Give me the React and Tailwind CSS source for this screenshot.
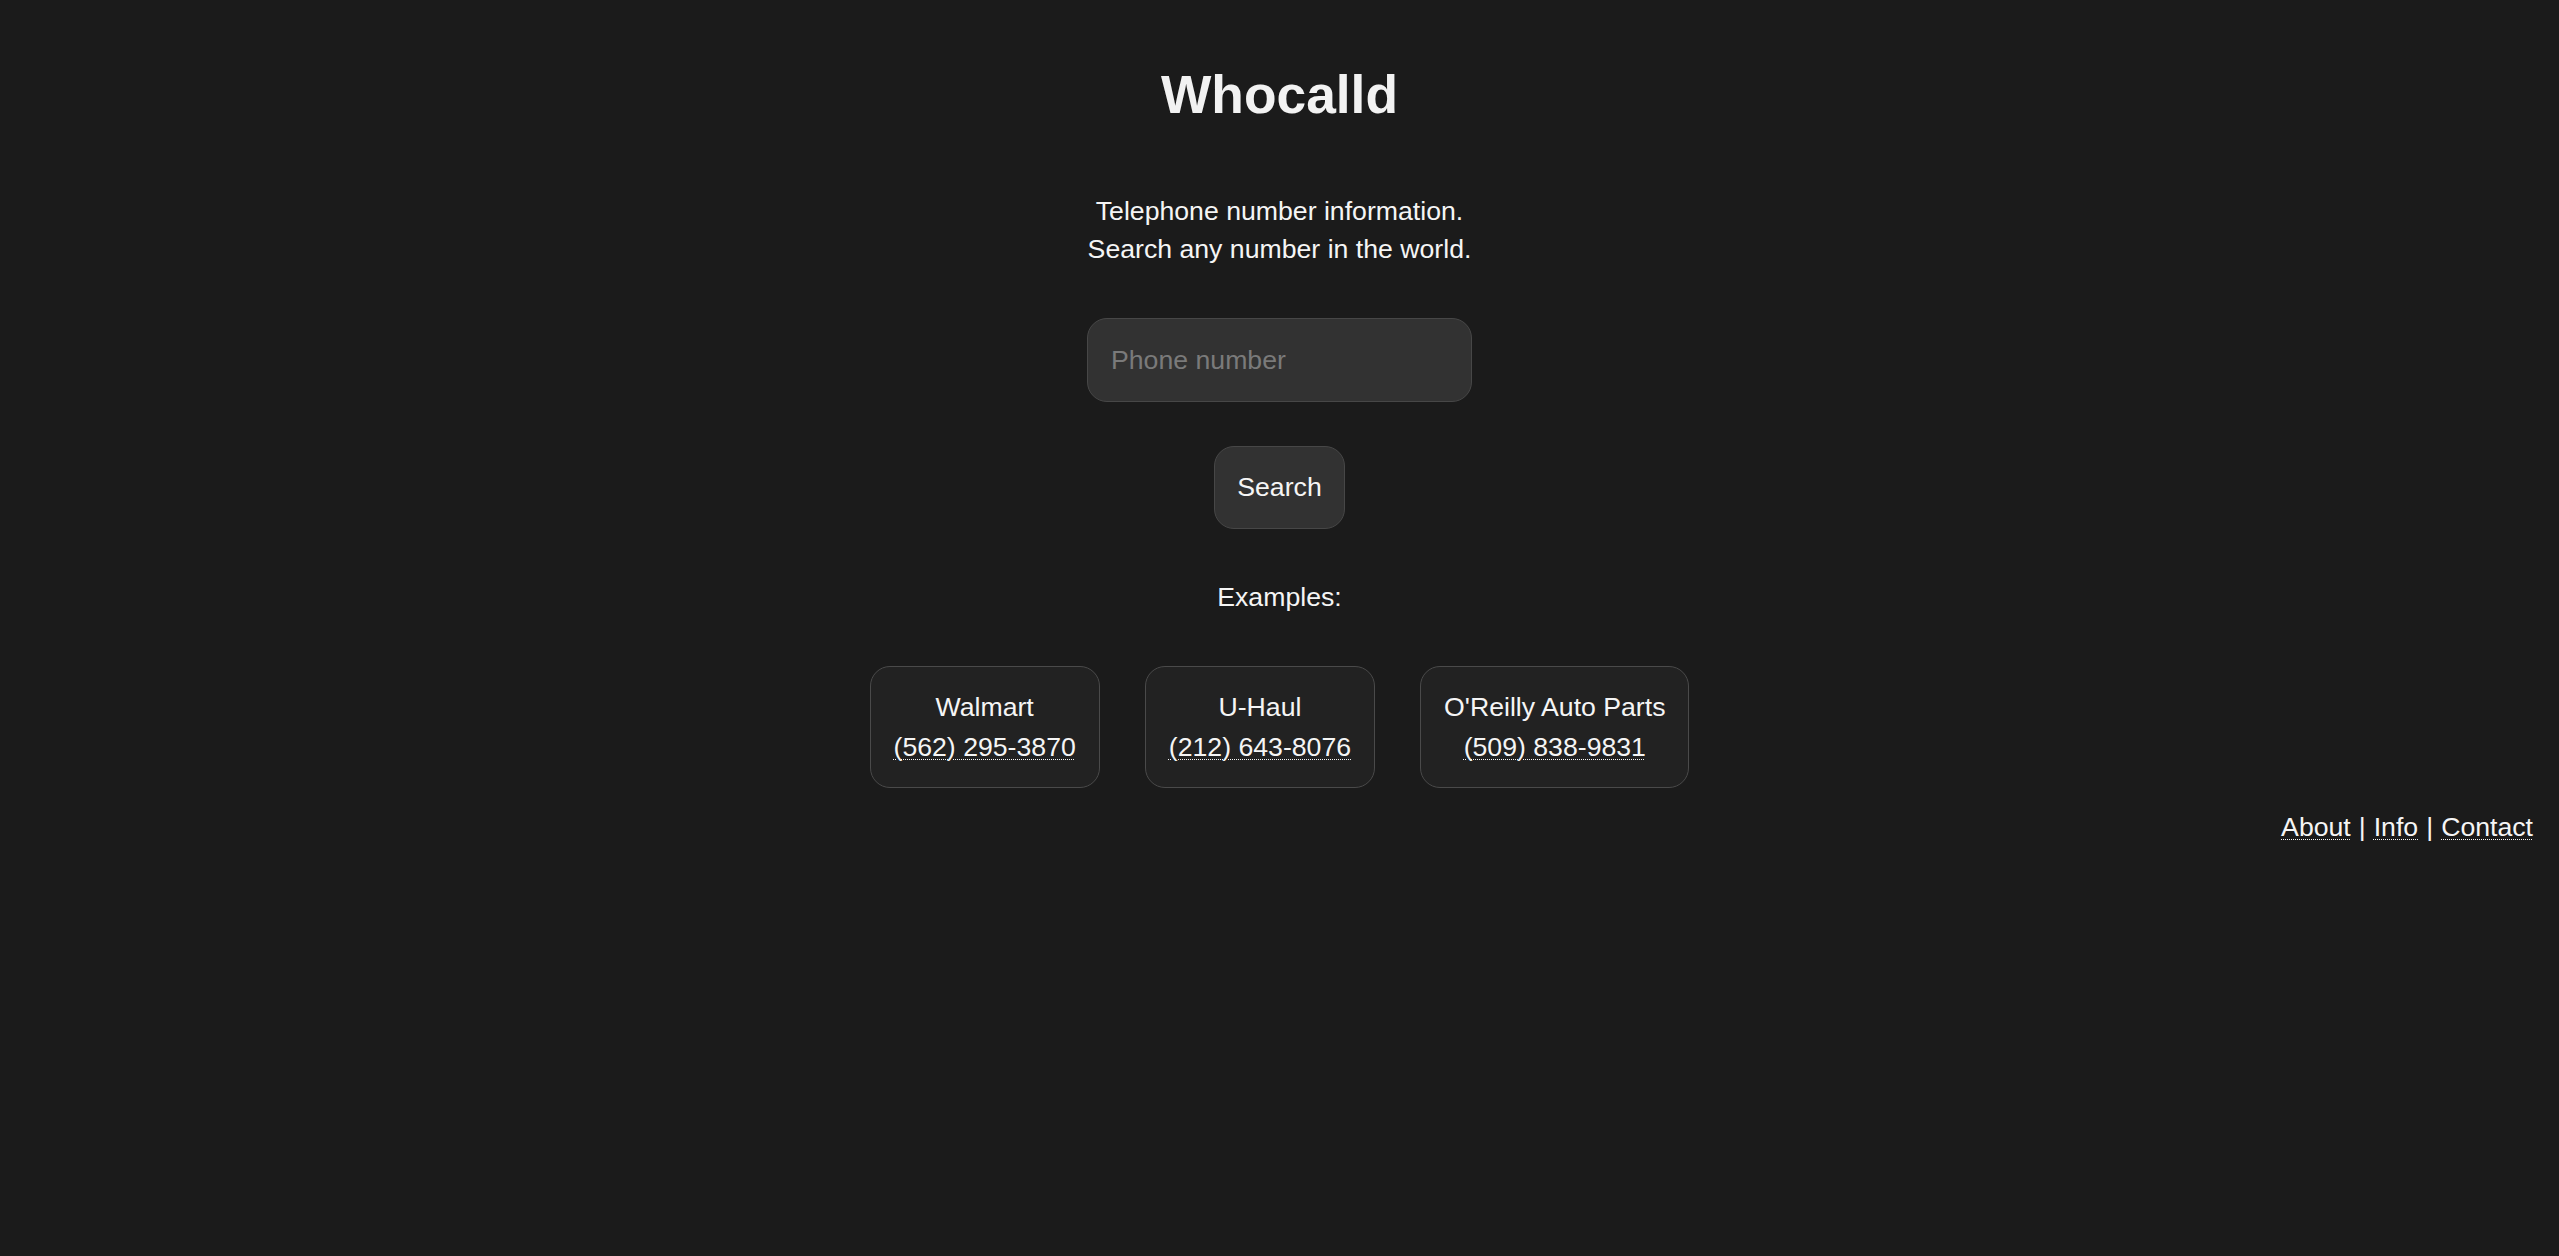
import { useState } from 'react'

const examples = [
  { name: 'Walmart', phone: '(562) 295-3870' },
  { name: 'U-Haul', phone: '(212) 643-8076' },
  { name: "O'Reilly Auto Parts", phone: '(509) 838-9831' },
]

const dotted = 'underline decoration-dotted decoration-[1px] underline-offset-[3px]'

// Single example lookup card: business name over a dotted-underlined number.
function ExampleCard({ name, phone }) {
  return (
    <div className="rounded-[20px] border border-[#4a4a4a] bg-[#222222] px-[23px] py-[20px] text-center leading-[40px]">
      <div>{name}</div>
      <a href="#" className={dotted}>
        {phone}
      </a>
    </div>
  )
}

export default function App() {
  const [phone, setPhone] = useState('')

  return (
    <div className="min-h-[1256px] bg-[#1b1b1b] font-['Liberation_Sans',Arial,sans-serif] text-[26.67px] leading-[33px] text-[#f5f5f5]">
      <div className="flex flex-col items-center pt-[63px]">
        <h1 className="text-[53.33px] font-bold leading-[64px] text-[#f2f2f2]">Whocalld</h1>

        <p className="mt-[65px] text-center leading-[38px]">
          Telephone number information.
          <br />
          Search any number in the world.
        </p>

        <input
          value={phone}
          onChange={(e) => setPhone(e.target.value)}
          placeholder="Phone number"
          className="mt-[50px] h-[84px] w-[385px] rounded-[20px] border border-[#474747] bg-[#323232] px-[23px] text-[#f5f5f5] outline-none placeholder:text-[#7a7a7a]"
        />

        <button className="mt-[44px] h-[83px] w-[131px] rounded-[20px] border border-[#474747] bg-[#323232] text-[#f5f5f5]">
          Search
        </button>

        <p className="mt-[52px]">Examples:</p>

        <div className="mt-[52px] flex gap-[45px]">
          {examples.map((ex) => (
            <ExampleCard key={ex.name} {...ex} />
          ))}
        </div>
      </div>

      <div className="mt-[23px] flex justify-end gap-[8px] pr-[26px]">
        <a href="#" className={dotted}>About</a>
        <span>|</span>
        <a href="#" className={dotted}>Info</a>
        <span>|</span>
        <a href="#" className={dotted}>Contact</a>
      </div>
    </div>
  )
}
